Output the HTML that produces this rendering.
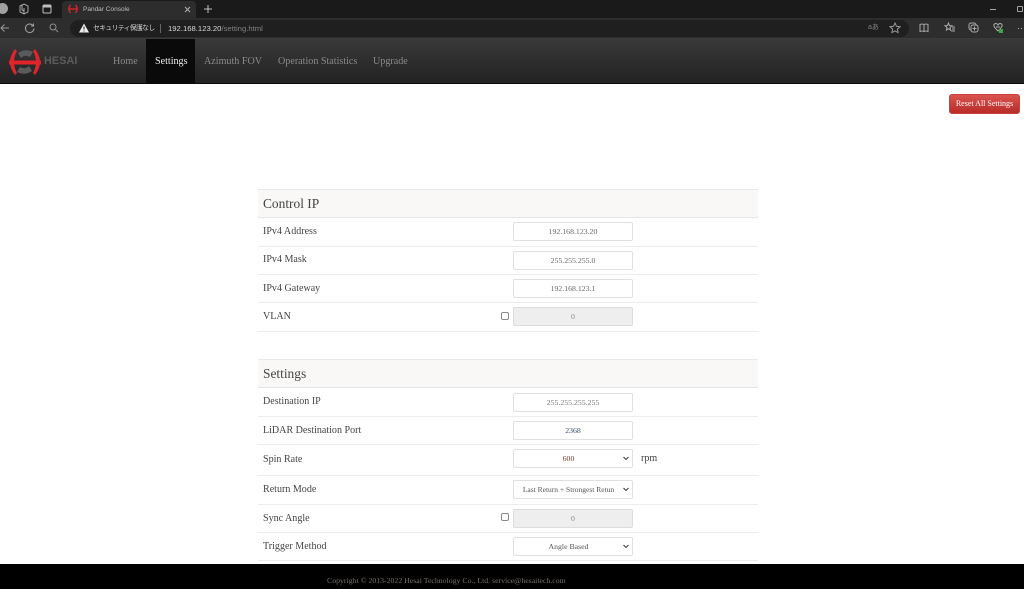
<!DOCTYPE html>
<html><head><meta charset="utf-8"><title>Pandar Console</title>
<style>
*{box-sizing:border-box}
html,body{margin:0;padding:0;width:1024px;height:589px;overflow:hidden;background:#fff;font-family:"Liberation Serif","Noto Serif CJK SC",serif}
.a{position:absolute}
.ui{font-family:"Liberation Sans","Noto Sans CJK JP",sans-serif}
.nav{position:absolute;top:50px;font-size:10.1px;line-height:24px;color:#8a8a8a;white-space:nowrap}
.head{position:absolute;left:258px;width:500px;height:29px;background:#f9f8f7;border-top:1px solid #e9e9e9;border-bottom:1px solid #e6e6e6;font-size:13.4px;line-height:28px;padding-left:5px;color:#444}
.line{position:absolute;left:258px;width:500px;height:1px;background:#ececec}
.lb{position:absolute;left:263px;font-size:10.05px;line-height:14px;color:#444;white-space:nowrap}
.in{position:absolute;left:513px;width:120px;height:19px;border:1px solid #e0e0e0;border-radius:2px;background:#fff;font-size:7.8px;line-height:17px;text-align:center;color:#666;white-space:nowrap}
.in.dis{background:#eee;border-color:#dcdcdc;color:#888}
.in.sel{padding-right:9px}
.in svg{position:absolute;right:3px;top:6px}
.cb{position:absolute;left:501px;width:8px;height:8px;border:1px solid #8a8a8a;border-radius:2px;background:#fff}
</style></head><body>
<!-- tab strip -->
<div class="a" style="left:0;top:0;width:1024px;height:18px;background:#1a1a1a"></div>
<div class="a" style="left:62px;top:1px;width:134px;height:17px;background:#2d2d2d;border-radius:4px 4px 0 0"></div>
<div class="a" style="left:-3px;top:3px;width:11px;height:11px;border-radius:50%;background:#a0a0a0"></div>
<svg class="a" style="left:19px;top:3px" width="11" height="12" viewBox="0 0 11 12" fill="none" stroke="#a8a8a8" stroke-width="1"><path d="M1 3l4-2 4 2v6l-4 2-4-2z M5 5v6 M3 2v5l2 1"/></svg>
<svg class="a" style="left:42px;top:4px" width="10" height="10" viewBox="0 0 10 10" fill="none" stroke="#c0c0c0" stroke-width="1"><rect x="1" y="1" width="8" height="8" rx="1"/><path d="M1 2.500h8" stroke-width="2"/></svg>
<svg class="a" style="left:68px;top:4px" width="10" height="10" viewBox="0 0 10 10" fill="none" stroke="#c8242a" stroke-width="1.600"><path d="M2.500 1C.5 3.500.5 6.500 2.500 9M7.500 1c2 2.500 2 5.500 0 8M1 5h8"/></svg>
<div class="a ui" style="left:83px;top:4px;font-size:6.5px;line-height:12px;color:#bdbdbd;white-space:nowrap">Pandar Console</div>
<svg class="a" style="left:184px;top:6px" width="7" height="7" viewBox="0 0 7 7" stroke="#b0b0b0" stroke-width="1"><path d="M1 1l5 5M6 1l-5 5"/></svg>
<svg class="a" style="left:203px;top:4px" width="10" height="10" viewBox="0 0 10 10" stroke="#c0c0c0" stroke-width="1"><path d="M5 1v8M1 5h8"/></svg>
<div class="a" style="left:990px;top:9px;width:6px;height:1px;background:#aaa"></div>
<div class="a" style="left:1017px;top:6px;width:6px;height:6px;border:1px solid #a0a0a0;border-radius:1px"></div>
<!-- toolbar -->
<div class="a" style="left:0;top:18px;width:1024px;height:20px;background:#2d2d2d"></div>
<div class="a" style="left:70px;top:20px;width:839px;height:17px;border-radius:9px;background:#1f1f1f"></div>
<svg class="a" style="left:0;top:23px" width="10" height="10" viewBox="0 0 10 10" fill="none" stroke="#999"><path d="M9 5H1M4.500 1.500L1 5l3.500 3.500"/></svg>
<svg class="a" style="left:24px;top:23px" width="11" height="11" viewBox="0 0 11 11" fill="none" stroke="#a0a0a0"><path d="M9 2.500A4.300 4.300 0 1 0 10 5.500M9.500 .5v2.500H7"/></svg>
<svg class="a" style="left:49px;top:23px" width="10" height="10" viewBox="0 0 10 10" fill="none" stroke="#909090"><circle cx="4" cy="4" r="3"/><path d="M6.500 6.500L9 9"/></svg>
<svg class="a" style="left:79px;top:23px" width="10" height="10" viewBox="0 0 10 10"><path d="M5 .5L10 9.500H0z" fill="#eee"/><path d="M5 3.500v3M5 7.500v1" stroke="#222"/></svg>
<div class="a ui" style="left:93px;top:22px;font-size:6.8px;letter-spacing:-.6px;line-height:13px;color:#d4d4d4;white-space:nowrap">セキュリティ保護なし</div>
<div class="a" style="left:160px;top:24px;width:1px;height:9px;background:#666"></div>
<div class="a ui" style="left:168px;top:22px;font-size:7.700px;line-height:13px;color:#d8d8d8;white-space:nowrap">192.168.123.20<span style="color:#808080">/setting.html</span></div>
<div class="a ui" style="left:868px;top:23px;font-size:7px;line-height:10px;color:#808080">aあ</div>
<svg class="a" style="left:889px;top:22px" width="12" height="12" viewBox="0 0 12 12" fill="none" stroke="#969696"><path d="M6 1l1.500 3.300 3.500.4-2.600 2.400.7 3.500L6 8.900l-3.100 1.700.7-3.500L1 4.700l3.500-.4z"/></svg>
<svg class="a" style="left:919px;top:23px" width="10" height="10" viewBox="0 0 10 10" fill="none" stroke="#aaa"><path d="M5 1.500C4 1 2 1 1 1.500v7c1-.5 3-.5 4 0 1-.5 3-.5 4 0v-7C8 1 6 1 5 1.500zM5 1.500v7"/></svg>
<svg class="a" style="left:944px;top:22px" width="11" height="11" viewBox="0 0 11 11" fill="none" stroke="#aaa"><path d="M4.500 1l1 2.500 2.500.3-2 1.700.6 2.600-2.100-1.400-2.100 1.400.6-2.600-2-1.700 2.500-.3zM8 5h3M8 7h3M7 9h4"/></svg>
<svg class="a" style="left:968px;top:22px" width="11" height="11" viewBox="0 0 11 11" fill="none" stroke="#aaa"><rect x="1" y="1" width="7" height="7" rx="2"/><rect x="3" y="3" width="7" height="7" rx="2" fill="#2d2d2d"/><path d="M6.500 4.500v4M4.500 6.500h4"/></svg>
<svg class="a" style="left:993px;top:22px" width="11" height="12" viewBox="0 0 11 12" fill="none" stroke="#aaa"><path d="M5 3C3.500 .5 .5 1.500 1 4c.3 1.500 2 3 4 5 2-2 3.700-3.500 4-5 .5-2.500-2.500-3.500-4-1zM3 5h4"/><rect x="6" y="7" width="4" height="4" fill="#3fa34d" stroke="none"/></svg>
<div class="a" style="left:1018px;top:28px;width:6px;height:1px;background:repeating-linear-gradient(90deg,#aaa 0 1px,transparent 1px 3px)"></div>
<!-- navbar -->
<div class="a" style="left:0;top:38px;width:1024px;height:46px;background:linear-gradient(#3a3a3a,#222);border-bottom:1px solid #0a0a0a"></div>
<div class="a" style="left:146px;top:39px;width:49px;height:44px;background:#0a0a0a"></div>
<svg class="a" style="left:7px;top:47px" width="36" height="30" viewBox="0 0 36 30" fill="none">
<path d="M11 6Q18 1 26 5L23 10Q18 7 14 11Z" fill="#5a5a5a"/><path d="M25 24Q18 29 10 25L13 20Q18 23 22 19Z" fill="#5a5a5a"/>
<path d="M8 2Q-2 15 8 28L10 26Q4 15 10 4Z" fill="#e0242a"/><path d="M28 2Q38 15 28 28L26 26Q32 15 26 4Z" fill="#e0242a"/>
<path d="M2 15.500h32" stroke="#e0242a" stroke-width="4"/></svg>
<div class="a ui" style="left:44px;top:55px;font-size:10.800px;line-height:13px;font-weight:bold;color:#5c5c5c;letter-spacing:.1px">HESAI</div>
<div class="nav" style="left:113px">Home</div>
<div class="nav" style="left:155px;color:#eee">Settings</div>
<div class="nav" style="left:204px">Azimuth FOV</div>
<div class="nav" style="left:278px">Operation Statistics</div>
<div class="nav" style="left:373px">Upgrade</div>
<!-- reset -->
<div class="a" style="left:949px;top:94px;width:71px;height:20px;background:linear-gradient(#d9534f,#b92c28);border:1px solid #c9403c;border-radius:3px;color:#fff;font-size:8px;line-height:18px;text-align:center;white-space:nowrap">Reset All Settings</div>
<!-- control ip -->
<div class="head" style="top:189px">Control IP</div>
<div class="lb" style="top:225px">IPv4 Address</div>
<div class="in" style="top:222px">192.168.123.20</div>
<div class="line" style="top:246px"></div>
<div class="lb" style="top:253px">IPv4 Mask</div>
<div class="in" style="top:251px">255.255.255.0</div>
<div class="line" style="top:274px"></div>
<div class="lb" style="top:282px">IPv4 Gateway</div>
<div class="in" style="top:279px">192.168.123.1</div>
<div class="line" style="top:302px"></div>
<div class="lb" style="top:310px">VLAN</div>
<div class="cb" style="top:312px"></div>
<div class="in dis" style="top:307px">0</div>
<div class="line" style="top:331px"></div>
<!-- settings -->
<div class="head" style="top:359px">Settings</div>
<div class="lb" style="top:395px">Destination IP</div>
<div class="in" style="top:393px;color:#777">255.255.255.255</div>
<div class="line" style="top:416px"></div>
<div class="lb" style="top:424px">LiDAR Destination Port</div>
<div class="in" style="top:421px;color:#3a4a6a">2368</div>
<div class="line" style="top:444px"></div>
<div class="lb" style="top:453px">Spin Rate</div>
<div class="in sel" style="top:449px;color:#7a3a30">600<svg width="6" height="5" viewBox="0 0 6 5" fill="none" stroke="#444" stroke-width="1.100"><path d="M.5 1L3 3.500 5.500 1"/></svg></div>
<div class="lb" style="top:452px;left:641px">rpm</div>
<div class="line" style="top:475px"></div>
<div class="lb" style="top:483px">Return Mode</div>
<div class="in sel" style="top:480px;color:#555;font-size:7.500px">Last Return + Strongest Retun<svg width="6" height="5" viewBox="0 0 6 5" fill="none" stroke="#444" stroke-width="1.100"><path d="M.5 1L3 3.500 5.500 1"/></svg></div>
<div class="line" style="top:504px"></div>
<div class="lb" style="top:512px">Sync Angle</div>
<div class="cb" style="top:513px"></div>
<div class="in dis" style="top:509px">0</div>
<div class="line" style="top:532px"></div>
<div class="lb" style="top:540px">Trigger Method</div>
<div class="in sel" style="top:537px;color:#555">Angle Based<svg width="6" height="5" viewBox="0 0 6 5" fill="none" stroke="#444" stroke-width="1.100"><path d="M.5 1L3 3.500 5.500 1"/></svg></div>
<div class="line" style="top:560px"></div>
<!-- footer -->
<div class="a" style="left:0;top:564px;width:1024px;height:25px;background:#000"></div>
<div class="a" style="left:327px;top:575px;font-size:7.800px;line-height:12px;color:#77706a;white-space:nowrap">Copyright © 2013-2022 Hesai Technology Co., Ltd. service@hesaitech.com</div>
</body></html>
